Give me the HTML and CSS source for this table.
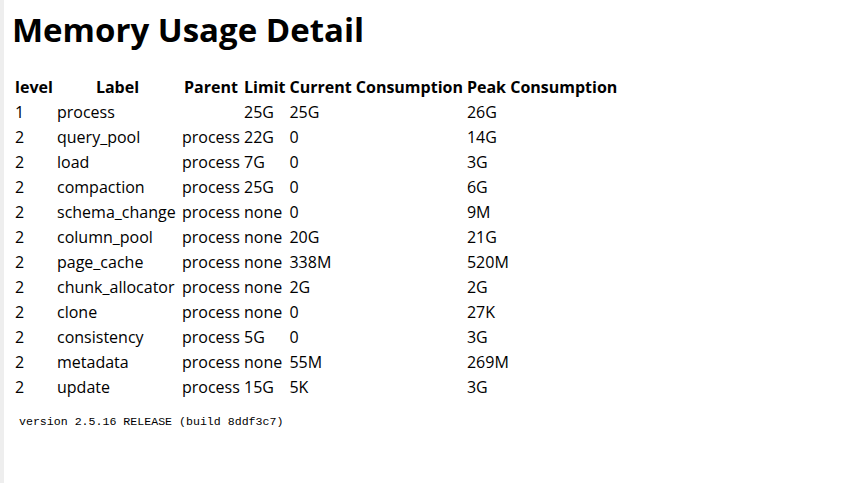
FILE: index.html
```html
<!DOCTYPE html>
<html>
<head>
<meta charset="utf-8">
<title>Memory Usage Detail</title>
<link rel="stylesheet" href="styles.css">
</head>
<body>
<div class="page">
  <h1 class="title">Memory Usage Detail</h1>
  <table class="mem">
    <thead>
      <tr><th class="c-level">level</th><th class="c-label">Label</th><th class="c-parent">Parent</th><th class="c-limit">Limit</th><th class="c-cur">Current Consumption</th><th class="c-peak">Peak Consumption</th></tr>
    </thead>
    <tbody>
      <tr><td>1</td><td>process</td><td></td><td>25G</td><td>25G</td><td>26G</td></tr>
      <tr><td>2</td><td>query_pool</td><td>process</td><td>22G</td><td>0</td><td>14G</td></tr>
      <tr><td>2</td><td>load</td><td>process</td><td>7G</td><td>0</td><td>3G</td></tr>
      <tr><td>2</td><td>compaction</td><td>process</td><td>25G</td><td>0</td><td>6G</td></tr>
      <tr><td>2</td><td>schema_change</td><td>process</td><td>none</td><td>0</td><td>9M</td></tr>
      <tr><td>2</td><td>column_pool</td><td>process</td><td>none</td><td>20G</td><td>21G</td></tr>
      <tr><td>2</td><td>page_cache</td><td>process</td><td>none</td><td>338M</td><td>520M</td></tr>
      <tr><td>2</td><td>chunk_allocator</td><td>process</td><td>none</td><td>2G</td><td>2G</td></tr>
      <tr><td>2</td><td>clone</td><td>process</td><td>none</td><td>0</td><td>27K</td></tr>
      <tr><td>2</td><td>consistency</td><td>process</td><td>5G</td><td>0</td><td>3G</td></tr>
      <tr><td>2</td><td>metadata</td><td>process</td><td>none</td><td>55M</td><td>269M</td></tr>
      <tr><td>2</td><td>update</td><td>process</td><td>15G</td><td>5K</td><td>3G</td></tr>
    </tbody>
  </table>
  <div class="version">version 2.5.16 RELEASE (build 8ddf3c7)</div>
</div>
</body>
</html>
```
FILE: styles.css
```css
html, body {
  margin: 0;
  padding: 0;
  background: #ffffff;
}
body {
  font-family: "Open Sans", "Noto Sans", sans-serif;
  color: #000;
}
.page {
  border-left: 4px solid #eeeeee;
  min-height: 483px;
  box-sizing: border-box;
  padding: 9px 8px 0 8px;
}
.title {
  font-size: 33px;
  line-height: 42px;
  font-weight: 700;
  margin: 0 0 23px 0;
}
.mem {
  border-spacing: 2px;
  font-size: 16px;
  line-height: 21px;
}
.mem th, .mem td {
  padding: 1px;
  white-space: nowrap;
}
.mem th {
  font-weight: 700;
  text-align: center;
}
.mem td {
  text-align: left;
}
.c-level { width: 38px; }
.c-label { width: 121px; }
.c-parent { width: 58px; }
.c-limit { width: 40px; }
.c-cur { width: 173px; }
.c-peak { width: 150px; }
.version {
  font-family: "Liberation Mono", "DejaVu Sans Mono", monospace;
  font-size: 11.6px;
  line-height: 14px;
  margin-top: 14px;
  padding-left: 7px;
}
```
